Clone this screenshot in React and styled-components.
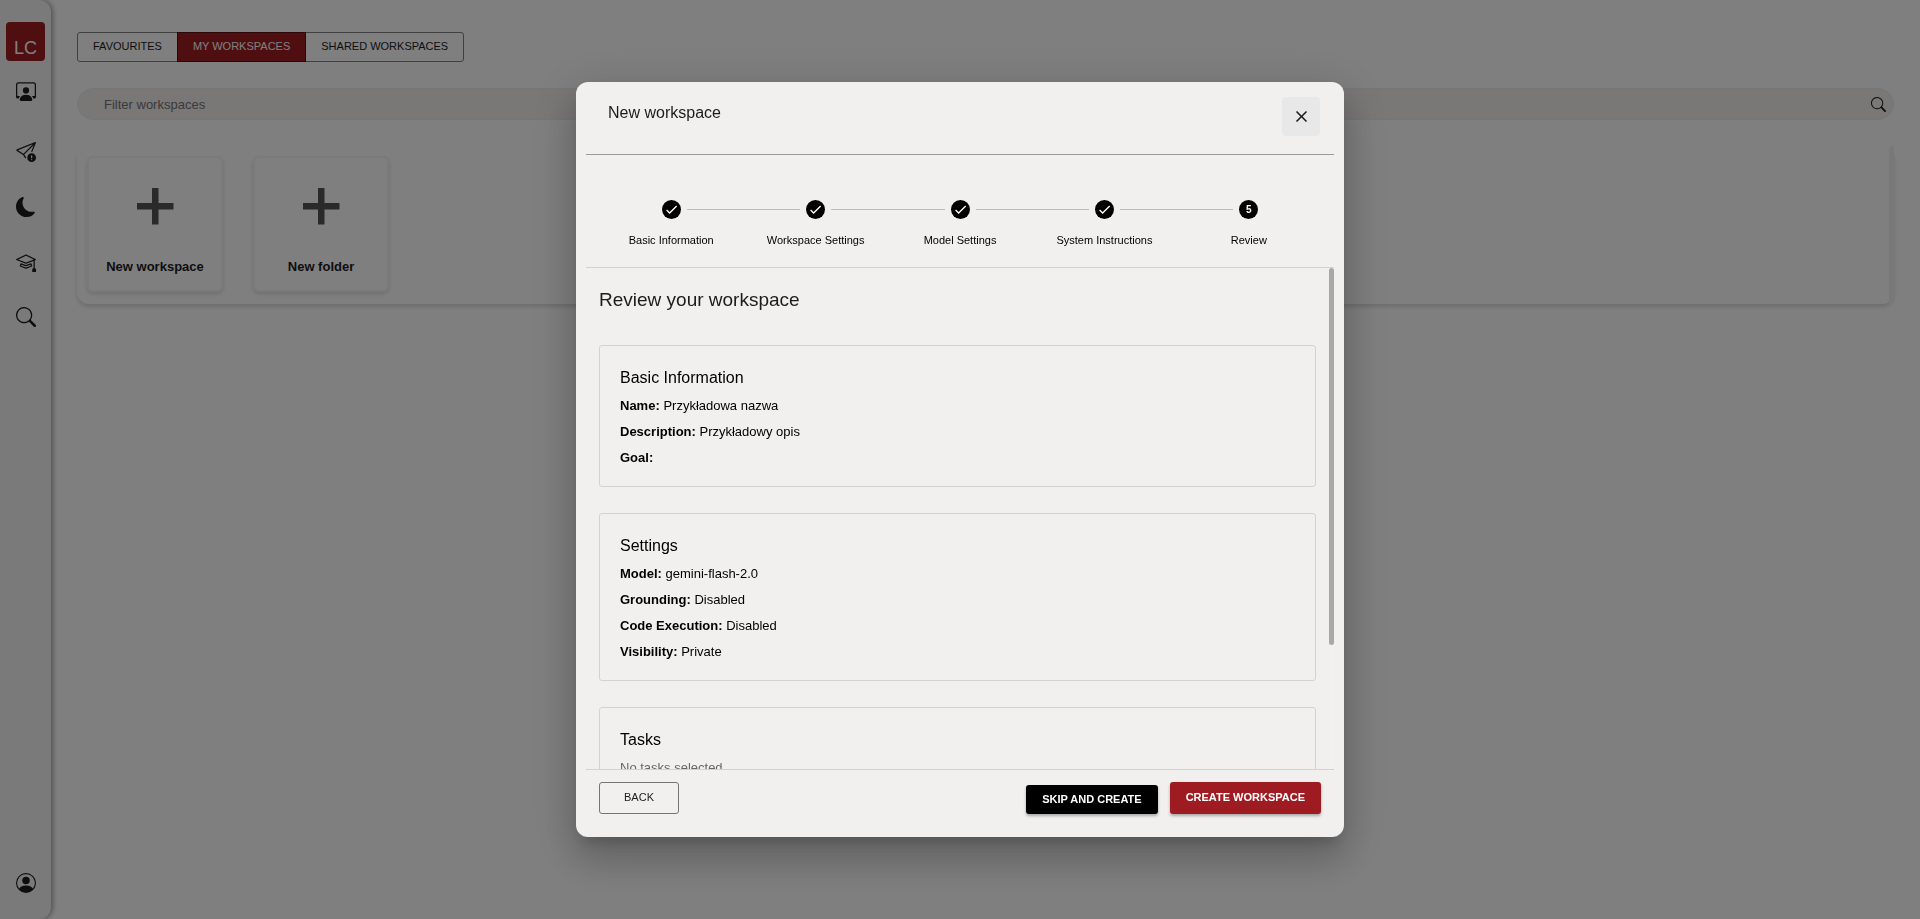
import { useState } from "react";
import styled, { createGlobalStyle, css } from "styled-components";
import {
  BsMoonFill,
  BsMortarboard,
  BsPersonCircle,
  BsPersonWorkspace,
  BsSearch,
  BsSendExclamation,
} from "react-icons/bs";
import { MdCheck, MdClose } from "react-icons/md";

const tabs = ["Favourites", "My workspaces", "Shared workspaces"];

const steps = [
  "Basic Information",
  "Workspace Settings",
  "Model Settings",
  "System Instructions",
  "Review",
];

const sections = [
  {
    title: "Basic Information",
    rows: [
      ["Name", "Przykładowa nazwa"],
      ["Description", "Przykładowy opis"],
      ["Goal", ""],
    ],
  },
  {
    title: "Settings",
    rows: [
      ["Model", "gemini-flash-2.0"],
      ["Grounding", "Disabled"],
      ["Code Execution", "Disabled"],
      ["Visibility", "Private"],
    ],
  },
  { title: "Tasks", rows: [], empty: "No tasks selected" },
];

function Sidebar() {
  return (
    <Side>
      <Logo href="#">LC</Logo>
      <SideLinks>
        <SideButton aria-label="Workspaces">
          <BsPersonWorkspace />
        </SideButton>
        <SideGroup>
          <SideButton aria-label="Report a problem">
            <BsSendExclamation />
          </SideButton>
          <SideButton aria-label="Dark mode">
            <BsMoonFill />
          </SideButton>
          <SideButton aria-label="Tutorials">
            <BsMortarboard />
          </SideButton>
          <SideButton aria-label="Search">
            <BsSearch />
          </SideButton>
        </SideGroup>
      </SideLinks>
      <SideButton aria-label="Account">
        <BsPersonCircle />
      </SideButton>
    </Side>
  );
}

function PlusIcon() {
  return (
    <svg viewBox="0 0 64 64" width="64" height="64" fill="currentColor">
      <path d="M29 14h6.500v15H50.500v6.500h-15V50.500H29v-15H14V29h15z" />
    </svg>
  );
}

function Workspaces() {
  const [tab, setTab] = useState("My workspaces");

  return (
    <Main>
      <Tabs>
        {tabs.map((item) => (
          <Tab key={item} $active={item === tab} onClick={() => setTab(item)}>
            {item}
          </Tab>
        ))}
      </Tabs>
      <Filter>
        <input
          type="text"
          placeholder="Filter workspaces"
          aria-label="Filter workspaces"
        />
        <BsSearch />
      </Filter>
      <Board>
        <Tiles>
          <Tile>
            <PlusIcon />
            New workspace
          </Tile>
          <Tile>
            <PlusIcon />
            New folder
          </Tile>
        </Tiles>
        <BoardTrack />
      </Board>
    </Main>
  );
}

function Stepper({ current }) {
  return (
    <Steps>
      {steps.map((label, index) => (
        <Step key={label}>
          <StepLine>
            <StepIcon>{index < current ? <MdCheck /> : index + 1}</StepIcon>
          </StepLine>
          {label}
        </Step>
      ))}
    </Steps>
  );
}

function WorkspaceDialog() {
  return (
    <Dialog role="dialog" aria-modal="true" aria-labelledby="dialog-title">
      <DialogHeader>
        <h2 id="dialog-title">New workspace</h2>
        <CloseButton aria-label="Close">
          <MdClose />
        </CloseButton>
      </DialogHeader>
      <Stepper current={4} />
      <DialogBody>
        <Review>
          <h3>Review your workspace</h3>
          {sections.map(({ title, rows, empty }) => (
            <Section key={title}>
              <h4>{title}</h4>
              {rows.map(([name, value]) => (
                <p key={name}>
                  <strong>{name}:</strong> {value}
                </p>
              ))}
              {empty && <Muted>{empty}</Muted>}
            </Section>
          ))}
        </Review>
        <ScrollTrack>
          <ScrollThumb />
        </ScrollTrack>
      </DialogBody>
      <DialogFooter>
        <BackButton>Back</BackButton>
        <SkipButton>Skip and create</SkipButton>
        <CreateButton>Create workspace</CreateButton>
      </DialogFooter>
    </Dialog>
  );
}

export default function App() {
  return (
    <>
      <GlobalStyle />
      <Page>
        <Sidebar />
        <Workspaces />
      </Page>
      <Backdrop>
        <WorkspaceDialog />
      </Backdrop>
    </>
  );
}

const GlobalStyle = createGlobalStyle`
  * {
    box-sizing: border-box;
  }

  body {
    margin: 0;
    background: #ffffff;
    color: #1c1c1c;
    font-family: "Liberation Sans", Arial, sans-serif;
    font-size: 13px;
  }

  h2, h3, h4, p, ol {
    margin: 0;
    padding: 0;
    font-weight: 400;
  }

  button, input {
    font-family: inherit;
    color: inherit;
  }

  button {
    cursor: pointer;
  }
`;

const Page = styled.div`
  display: flex;
  min-height: 100vh;
`;

const Side = styled.nav`
  display: flex;
  flex-direction: column;
  align-items: center;
  width: 51px;
  padding: 22px 0 22px;
  border-radius: 0 12px 12px 0;
  background: #f4f4f4;
  box-shadow: 2px 0 5px rgba(0, 0, 0, 0.35);
`;

const Logo = styled.a`
  display: flex;
  align-items: flex-end;
  justify-content: center;
  width: 39px;
  height: 39px;
  padding-bottom: 3px;
  border-radius: 4px;
  background: #9e1c21;
  color: #ffffff;
  font-size: 18px;
  line-height: 20px;
  text-decoration: none;
`;

const SideLinks = styled.div`
  flex: 1;
  display: flex;
  flex-direction: column;
  gap: 33px;
  padding-top: 16px;
`;

const SideGroup = styled.div`
  display: flex;
  flex-direction: column;
  gap: 27px;
`;

const SideButton = styled.button`
  display: flex;
  padding: 4px;
  border: none;
  background: none;
  font-size: 20px;
`;

const Main = styled.main`
  flex: 1;
  display: flex;
  flex-direction: column;
  align-items: stretch;
  padding: 32px 26px;
`;

const Tabs = styled.div`
  display: flex;
`;

const Tab = styled.button`
  height: 30px;
  margin-left: -1px;
  padding: 0 15px 2px;
  border: 1px solid #808080;
  background: #ffffff;
  font-size: 11px;
  text-transform: uppercase;

  &:first-child {
    margin-left: 0;
    border-radius: 3px 0 0 3px;
  }

  &:last-child {
    border-radius: 0 3px 3px 0;
  }

  ${({ $active }) =>
    $active &&
    css`
      z-index: 1;
      border-color: #5c1013;
      background: #9e1c21;
      color: #ffffff;
    `}
`;

const Filter = styled.div`
  display: flex;
  align-items: center;
  height: 32px;
  margin-top: 26px;
  padding: 0 7px 0 26px;
  border: 1px solid #ececec;
  border-radius: 16px;
  background: #f5eeef;

  input {
    flex: 1;
    padding: 0;
    border: none;
    outline: none;
    background: none;
    font-size: 13px;
  }

  input::placeholder {
    color: #757575;
  }

  svg {
    font-size: 15px;
  }
`;

const Board = styled.section`
  display: flex;
  margin-top: 26px;
  border-radius: 12px;
  box-shadow: 0 3px 4px rgba(0, 0, 0, 0.14);
`;

const Tiles = styled.div`
  flex: 1;
  display: flex;
  gap: 30px;
  padding: 10px 10px 12px;
`;

const BoardTrack = styled.div`
  width: 5px;
  border-radius: 3px;
  background: #f1f1f1;
`;

const Tile = styled.button`
  display: flex;
  flex-direction: column;
  align-items: center;
  gap: 19px;
  width: 136px;
  height: 136px;
  padding: 16px 0 0;
  border: 2px solid #f4f4f4;
  border-radius: 6px;
  background: #ffffff;
  box-shadow: 0 2px 4px rgba(0, 0, 0, 0.14);
  font-size: 13px;
  font-weight: 700;
  line-height: 20px;

  svg {
    color: #555555;
  }
`;

const Backdrop = styled.div`
  position: fixed;
  inset: 0;
  z-index: 10;
  display: flex;
  align-items: center;
  justify-content: center;
  padding: 82px 0;
  background: rgba(0, 0, 0, 0.5);
`;

const Dialog = styled.div`
  display: flex;
  flex-direction: column;
  width: 40%;
  max-height: 100%;
  padding: 10px;
  border-radius: 12px;
  background: #f1f0ee;
  box-shadow: 0 11px 15px -7px rgba(0, 0, 0, 0.2),
    0 24px 38px 3px rgba(0, 0, 0, 0.14), 0 9px 46px 8px rgba(0, 0, 0, 0.12);
`;

const DialogHeader = styled.header`
  display: flex;
  align-items: flex-start;
  justify-content: space-between;
  padding: 5px 14px 18px 22px;
  border-bottom: 1px solid #9a9a9a;

  h2 {
    padding-top: 4px;
    font-size: 16px;
    line-height: 24px;
  }
`;

const CloseButton = styled.button`
  display: flex;
  align-items: center;
  justify-content: center;
  width: 38px;
  height: 39px;
  padding: 0;
  border: none;
  border-radius: 4px;
  background: #e8e8e8;
  font-size: 19px;
`;

const Steps = styled.ol`
  display: flex;
  padding: 45px 13px 19px;
  border-bottom: 1px solid #d2d2d2;
  list-style: none;
`;

const StepLine = styled.span`
  display: flex;
  align-items: center;
  gap: 6px;
  width: 100%;

  &::before,
  &::after {
    content: "";
    flex: 1;
    height: 1px;
    background: #bdbdbd;
  }
`;

const Step = styled.li`
  flex: 1;
  display: flex;
  flex-direction: column;
  align-items: center;
  gap: 13px;
  color: #000000;
  font-size: 11px;
  line-height: 16px;

  &:first-child ${StepLine}::before, &:last-child ${StepLine}::after {
    background: none;
  }
`;

const StepIcon = styled.span`
  display: flex;
  align-items: center;
  justify-content: center;
  width: 19px;
  height: 19px;
  border-radius: 50%;
  background: #000000;
  color: #ffffff;
  font-size: 10px;
  font-weight: 700;

  svg {
    font-size: 15px;
  }
`;

const DialogBody = styled.div`
  display: flex;
  min-height: 0;
  overflow: hidden;
`;

const Review = styled.div`
  flex: 1;
  display: flex;
  flex-direction: column;
  gap: 26px;
  padding: 17px 13px 20px;

  h3 {
    margin-bottom: 4px;
    font-size: 19px;
    line-height: 30px;
  }
`;

const Section = styled.section`
  display: flex;
  flex-direction: column;
  gap: 6px;
  padding: 20px 20px 18px;
  border: 1px solid #d2d2d2;
  border-radius: 3px;
  color: #000000;
  line-height: 20px;

  h4 {
    font-size: 16px;
    line-height: 24px;
  }
`;

const Muted = styled.p`
  color: #666666;
`;

const ScrollTrack = styled.div`
  width: 5px;
  background: #f1f1f1;
`;

const ScrollThumb = styled.div`
  height: 377px;
  border-radius: 3px;
  background: #a8a8a8;
`;

const DialogFooter = styled.footer`
  display: flex;
  align-items: flex-end;
  gap: 12px;
  padding: 12px 13px 13px;
  border-top: 1px solid #d2d2d2;
`;

const Button = styled.button`
  height: 32px;
  padding: 0 16px 2px;
  border: none;
  border-radius: 3px;
  font-size: 11px;
  font-weight: 700;
  text-transform: uppercase;
`;

const BackButton = styled(Button)`
  min-width: 80px;
  margin-right: auto;
  border: 1px solid #757575;
  background: none;
  font-weight: 400;
`;

const SkipButton = styled(Button)`
  height: 29px;
  background: #000000;
  color: #ffffff;
  box-shadow: 0 2px 3px rgba(0, 0, 0, 0.3);
`;

const CreateButton = styled(Button)`
  background: #9e1c21;
  color: #ffffff;
  box-shadow: 0 2px 3px rgba(0, 0, 0, 0.3);
`;
